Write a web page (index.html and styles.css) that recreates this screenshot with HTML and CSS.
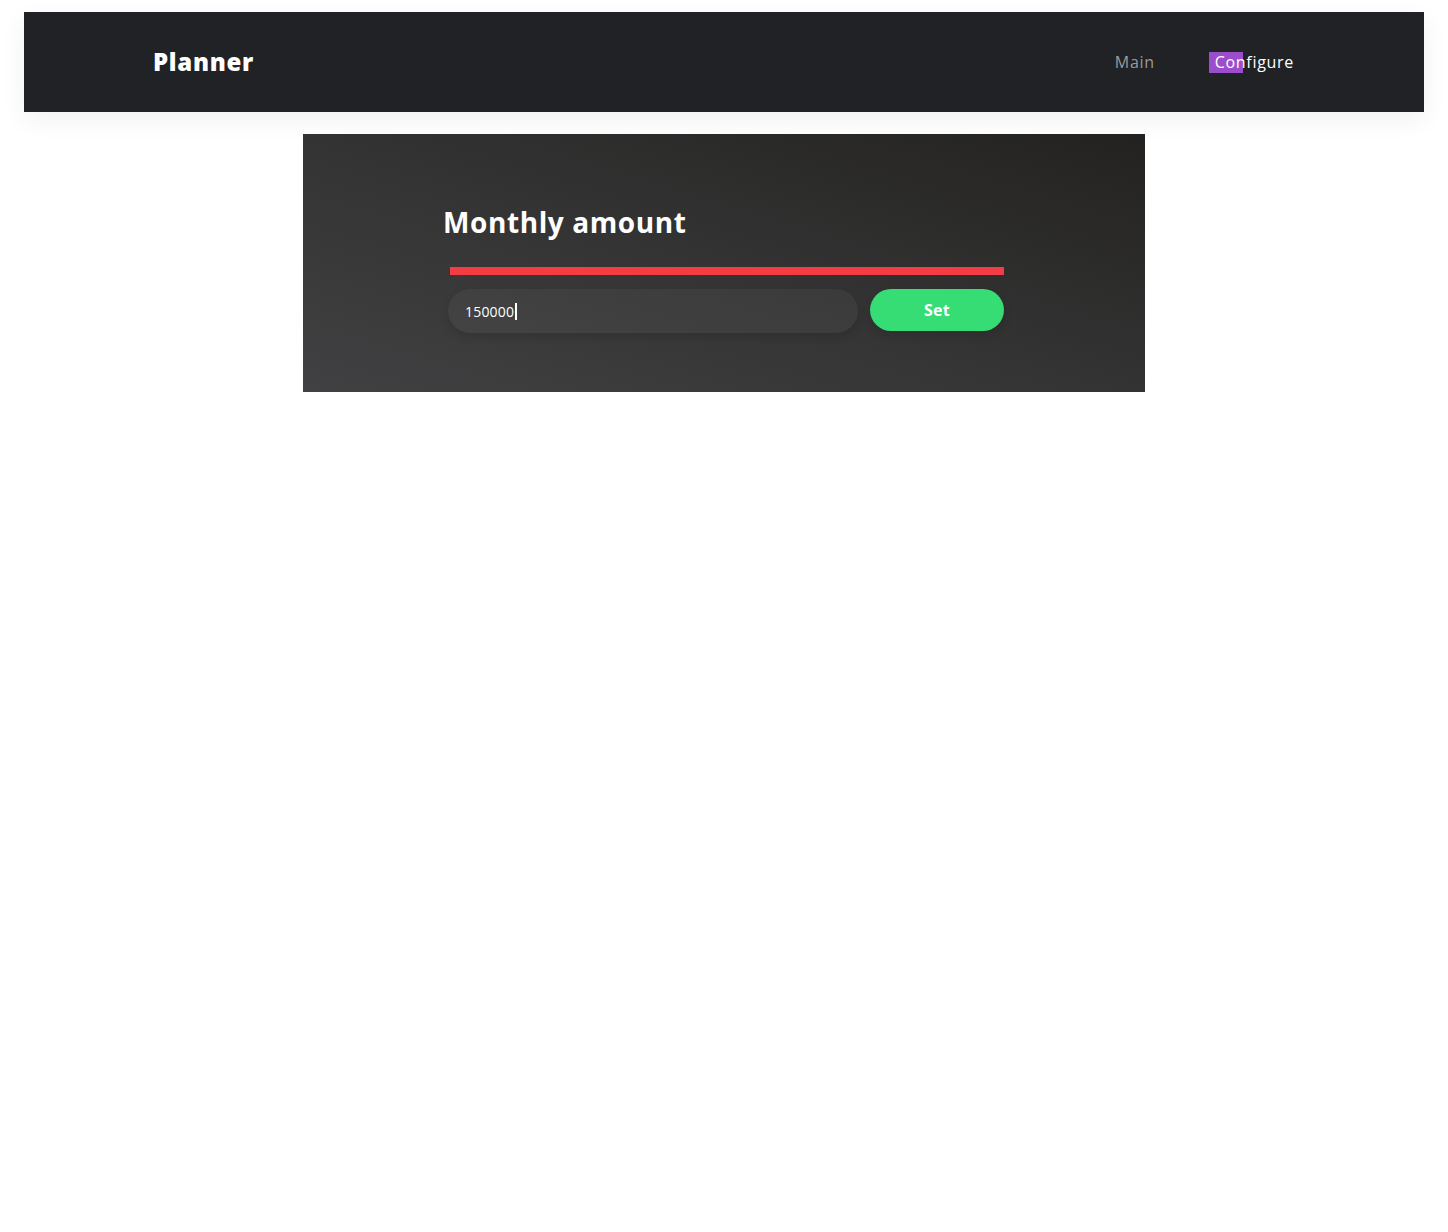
FILE: index.html
```html
<!DOCTYPE html>
<html lang="en">
<head>
<meta charset="utf-8">
<title>Planner</title>
<link rel="stylesheet" href="styles.css">
</head>
<body>
<div class="page">
  <header class="topbar">
    <div class="brand">Planner</div>
    <nav class="nav">
      <a class="nav-link" href="#">Main</a>
      <a class="nav-link active" href="#"><span class="hl"></span><span class="label">Configure</span></a>
    </nav>
  </header>
  <main class="card">
    <h1 class="title">Monthly amount</h1>
    <div class="bar"></div>
    <form class="row">
      <div class="field"><span class="value">150000</span><span class="caret"></span></div>
      <button class="btn" type="button">Set</button>
    </form>
  </main>
</div>
</body>
</html>
```

FILE: styles.css
```css
* { box-sizing: border-box; }
html, body { margin: 0; padding: 0; background: #fff; }
body { font-family: "Open Sans", "Noto Sans", sans-serif; }
.page { padding: 12px 24px; }
.topbar {
  height: 100px;
  background: #212226;
  display: flex;
  align-items: center;
  justify-content: space-between;
  padding: 0 130px 0 129px;
  box-shadow: 0 8px 24px rgba(0,0,0,0.06);
}
.brand {
  color: #fff;
  font-weight: 800;
  font-size: 24px;
  letter-spacing: 0.7px;
  margin-top: -1px;
}
.nav { display: flex; gap: 60px; align-items: center; }
.nav-link {
  color: #9a9a9c;
  text-decoration: none;
  font-size: 16px;
  letter-spacing: 0.7px;
  position: relative;
}
.nav-link.active { color: #fff; }
.label { position: relative; }
.hl {
  position: absolute;
  left: -6px;
  top: 1px;
  width: 34px;
  height: 21px;
  background: #9c4dcc;
}
.card {
  width: 842px;
  height: 258px;
  margin: 22px auto 0;
  background: linear-gradient(to bottom left, #232220 0%, #333333 50%, #414143 100%);
  padding: 70px 141px 0 140px;
}
.title {
  margin: 0;
  color: #fff;
  font-size: 28px;
  font-weight: 700;
  line-height: 36px;
  letter-spacing: 0.6px;
}
.bar {
  height: 8px;
  background: #f43c45;
  margin: 27px 0 0 7px;
}
.row {
  display: flex;
  align-items: center;
  gap: 12px;
  margin: 14px 0 0 5px;
}
.field {
  width: 410px;
  height: 44px;
  border-radius: 22px;
  background: rgba(255,255,255,0.045);
  box-shadow: 0 4px 10px rgba(0,0,0,0.12);
  display: flex;
  align-items: center;
  padding-left: 17px;
  color: #fff;
  font-size: 14px;
  letter-spacing: 0.2px;
}
.caret {
  display: inline-block;
  width: 2px;
  height: 17px;
  background: #fff;
  margin-left: 1px;
}
.btn {
  width: 134px;
  height: 42px;
  border: none;
  border-radius: 21px;
  background: #36dc74;
  color: #fff;
  font-family: inherit;
  font-weight: 700;
  font-size: 16px;
  letter-spacing: 0.3px;
  margin-top: -3px;
  box-shadow: 0 4px 10px rgba(0,0,0,0.12);
}
```
